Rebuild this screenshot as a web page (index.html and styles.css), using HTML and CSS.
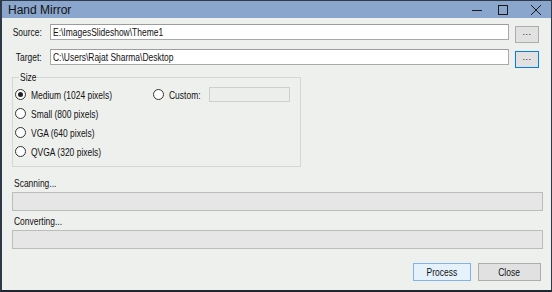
FILE: index.html
```html
<!DOCTYPE html>
<html>
<head>
<meta charset="utf-8">
<link rel="stylesheet" href="styles.css">
</head>
<body>
<div class="window">
  <div class="titlebar">
    <span class="title">Hand Mirror</span>
    <div class="controls">
      <svg class="ctl" width="12" height="12" viewBox="0 0 12 12"><path d="M1 6.5H11" stroke="#1a1a1a" stroke-width="1"/></svg>
      <svg class="ctl" width="12" height="12" viewBox="0 0 12 12"><rect x="1.5" y="1.5" width="9" height="9" fill="none" stroke="#1a1a1a" stroke-width="1"/></svg>
      <svg class="ctl" width="12" height="12" viewBox="0 0 12 12"><path d="M1 1L11 11M11 1L1 11" stroke="#1a1a1a" stroke-width="1"/></svg>
    </div>
  </div>
  <div class="content">
    <div class="row path-row">
      <label class="lbl"><span class="t tr">Source:</span></label>
      <div class="input"><span class="t">E:\ImagesSlideshow\Theme1</span></div>
      <div class="btn-browse">...</div>
    </div>
    <div class="row path-row second">
      <label class="lbl"><span class="t tr">Target:</span></label>
      <div class="input"><span class="t">C:\Users\Rajat Sharma\Desktop</span></div>
      <div class="btn-browse focused">...</div>
    </div>
    <fieldset class="group">
      <legend><span class="t">Size</span></legend>
      <div class="group-grid">
        <div class="radios">
          <div class="radio"><span class="dot checked"></span><span class="t">Medium (1024 pixels)</span></div>
          <div class="radio"><span class="dot"></span><span class="t">Small (800 pixels)</span></div>
          <div class="radio"><span class="dot"></span><span class="t">VGA (640 pixels)</span></div>
          <div class="radio"><span class="dot"></span><span class="t">QVGA (320 pixels)</span></div>
        </div>
        <div class="custom">
          <div class="radio"><span class="dot"></span><span class="t">Custom:</span></div>
          <div class="custom-input"></div>
        </div>
      </div>
    </fieldset>
    <div class="status first"><span class="t">Scanning...</span></div>
    <div class="progress"></div>
    <div class="status"><span class="t">Converting...</span></div>
    <div class="progress"></div>
    <div class="actions">
      <div class="btn primary"><span class="t tc">Process</span></div>
      <div class="btn"><span class="t tc">Close</span></div>
    </div>
  </div>
</div>
</body>
</html>
```

FILE: styles.css
```css
* { box-sizing: border-box; }
html, body { margin: 0; padding: 0; }
body {
  font-family: "Liberation Sans", Arial, sans-serif;
  font-size: 11px;
  color: #111;
  background: #eef0ee;
}
.t {
  display: inline-block;
  white-space: nowrap;
  transform: scaleX(0.77);
  transform-origin: left center;
}
.t.tr { transform-origin: right center; }
.t.tc { transform-origin: center center; }
.window {
  width: 552px;
  height: 292px;
  border-left: 2px solid #2f3a48;
  border-top: 1px solid #2f3a48;
  border-right: 1px solid #2f3a48;
  border-bottom: 2px solid #1f2630;
  background: #eef0ee;
  display: flex;
  flex-direction: column;
}
.titlebar {
  height: 17px;
  background: #8aa6cc;
  display: flex;
  align-items: center;
  justify-content: space-between;
  padding-left: 6px;
}
.title {
  font-family: "Liberation Sans", Arial, sans-serif;
  font-size: 12px;
  color: #111;
}
.controls {
  display: flex;
  padding-right: 9px;
  align-items: center;
}
.ctl { display: block; }
.ctl + .ctl { margin-left: 14px; }
.ctl + .ctl + .ctl { margin-left: 21px; }
.content {
  flex: 1;
  padding: 6px 10px 0 10px;
  display: flex;
  flex-direction: column;
}
.row { display: flex; align-items: flex-start; }
.path-row.second { margin-top: 6px; }
.lbl {
  width: 30px;
  display: flex;
  justify-content: flex-end;
  margin-right: 8px;
  padding-top: 2px;
}
.input {
  width: 459px;
  height: 16px;
  background: #fff;
  border: 1px solid #a9a9a9;
  border-top-color: #9c9c9c;
  padding: 1px 2px 0;
  white-space: nowrap;
  line-height: 13px;
}
.btn-browse {
  width: 24px;
  height: 17px;
  margin-left: 6px;
  margin-top: 2px;
  border: 1px solid #adadad;
  background: #e1e1e1;
  text-align: center;
  font-size: 9px;
  line-height: 10px;
  letter-spacing: 0.5px;
}
.btn-browse.focused { border-color: #0a7ae6; }
.group {
  margin: 3px 0 0 0;
  width: 289px;
  height: 96px;
  border: 1px solid #d6d6d6;
  padding: 0 6px 0 2px;
}
.group legend {
  padding: 0 1px;
  margin-left: 4px;
  line-height: 12px;
}
.group legend .t { width: 16px; }
.group-grid { display: flex; }
.radios {
  width: 138px;
  display: flex;
  flex-direction: column;
  gap: 6px;
  padding-top: 5px;
}
.radio {
  display: flex;
  align-items: center;
  height: 13px;
}
.dot {
  width: 11px;
  height: 11px;
  border: 1px solid #333;
  border-radius: 50%;
  background: #fff;
  margin-right: 5px;
  position: relative;
  flex: none;
}
.dot.checked::after {
  content: "";
  position: absolute;
  left: 2px;
  top: 2px;
  width: 5px;
  height: 5px;
  border-radius: 50%;
  background: #222;
}
.custom {
  display: flex;
  align-items: center;
  padding-top: 3px;
  height: 20px;
}
.custom .radio { width: 56px; }
.custom-input {
  width: 81px;
  height: 15px;
  border: 1px solid #cfcfcf;
  background: #eceeec;
}
.status {
  margin-top: 4px;
  margin-left: 2px;
  line-height: 12px;
}
.status.first { margin-top: 10px; }
.progress {
  margin-top: 3px;
  width: 531px;
  height: 19px;
  border: 1px solid #bcbcbc;
  background: #e6e6e6;
}
.actions {
  margin-top: 14px;
  display: flex;
  justify-content: flex-end;
  gap: 7px;
}
.btn {
  height: 18px;
  width: 63px;
  border: 1px solid #adadad;
  background: #e1e1e1;
  text-align: center;
  line-height: 16px;
}
.btn.primary {
  width: 58px;
  border-color: #7eb4ea;
  background: #e5f1fb;
}
```
